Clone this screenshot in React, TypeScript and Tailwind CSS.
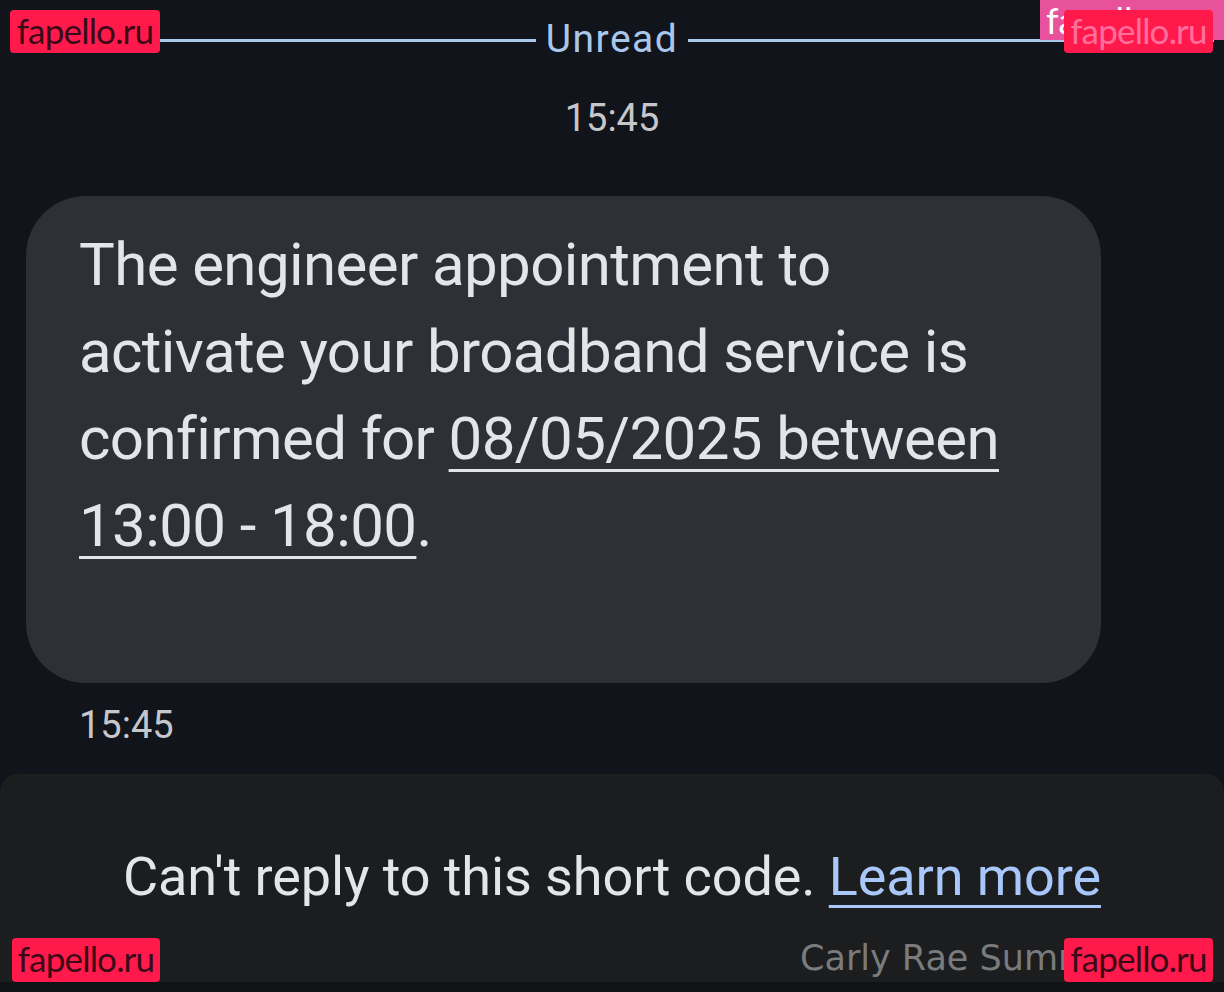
import React from "react";

function Watermark({ className, textClass }: { className: string; textClass: string }) {
  return (
    <div className={`absolute flex items-center justify-center rounded-[4px] bg-[#ff1a4b] ${className}`}>
      <span className={`text-[35px] leading-none tracking-[-0.8px] -mt-[3px] ${textClass}`} style={{ fontFamily: "Lato, 'DejaVu Sans', sans-serif" }}>
        fapello.ru
      </span>
    </div>
  );
}

export default function App() {
  const sans = { fontFamily: "Roboto, 'Noto Sans', sans-serif" };
  return (
    <div className="relative w-[1224px] h-[992px] overflow-hidden bg-[#11141a] flex flex-col" style={sans}>
      {/* Unread divider */}
      <div className="flex items-center h-[80px] px-[10px] gap-[10px]">
        <div className="flex-1 h-[3px] bg-[#a9c7ea]" />
        <span className="text-[39px] leading-none text-[#a9c7ea] tracking-[1.5px] -mt-[1px]">Unread</span>
        <div className="flex-1 h-[3px] bg-[#a9c7ea]" />
      </div>
      <div className="flex justify-center">
        <span className="text-[38px] leading-[48px] text-[#c6c7cb] mt-[14px]">15:45</span>
      </div>

      {/* Bubble */}
      <div className="mt-[54px] ml-[26px] w-[1075px] h-[487px] rounded-[60px] bg-[#2d3036] pl-[53px] pr-[20px] pt-[25px]">
        <p className="text-[60px] leading-[87px] text-[#e4e5e8] tracking-[-0.6px] whitespace-nowrap">
          The engineer appointment to
          <br />
          activate your broadband service is
          <br />
          confirmed for{" "}
          <span className="underline decoration-[3px] underline-offset-[10px]">08/05/2025 between</span>
          <br />
          <span className="underline decoration-[3px] underline-offset-[10px]">13:00 - 18:00</span>.
        </p>
      </div>

      <div className="pl-[79px] mt-[18px]">
        <span className="text-[38px] leading-[48px] text-[#c6c7cb]">15:45</span>
      </div>

      {/* Bottom panel */}
      <div className="mt-[25px] h-[208px] rounded-t-[18px] bg-[#1b1d1f] flex justify-center pt-[68px]">
        <p className="text-[54px] leading-[70px] text-[#e4e5e8] tracking-[-0.1px]">
          Can't reply to this short code.{" "}
          <span className="text-[#a8c7fa] underline decoration-[3px] underline-offset-[10px]">Learn more</span>
        </p>
      </div>
      <div className="flex-1 bg-[#121315]" />

      {/* overlay name */}
      <span
        className="absolute left-[800px] top-[936px] text-[35px] leading-[44px] text-[#7a7b7c]"
        style={{ fontFamily: "'DejaVu Sans', sans-serif" }}
      >
        Carly Rae Summers
      </span>

      {/* watermarks */}
      <div className="absolute left-[1040px] top-0 w-[184px] h-[40px] bg-[#e8529c] flex items-start pl-[6px] pt-[2px] overflow-hidden">
        <span className="text-[36px] leading-none text-white" style={{ fontFamily: "Lato, sans-serif" }}>fapello.ru</span>
      </div>
      <Watermark className="left-[10px] top-[10px] w-[150px] h-[43px]" textClass="text-[#3a0a18]" />
      <Watermark className="left-[1064px] top-[10px] w-[149px] h-[43px]" textClass="text-[#ff6f9c]" />
      <Watermark className="left-[12px] top-[938px] w-[148px] h-[44px]" textClass="text-[#3a0a18]" />
      <Watermark className="left-[1064px] top-[938px] w-[149px] h-[44px]" textClass="text-[#3a0a18]" />
    </div>
  );
}
